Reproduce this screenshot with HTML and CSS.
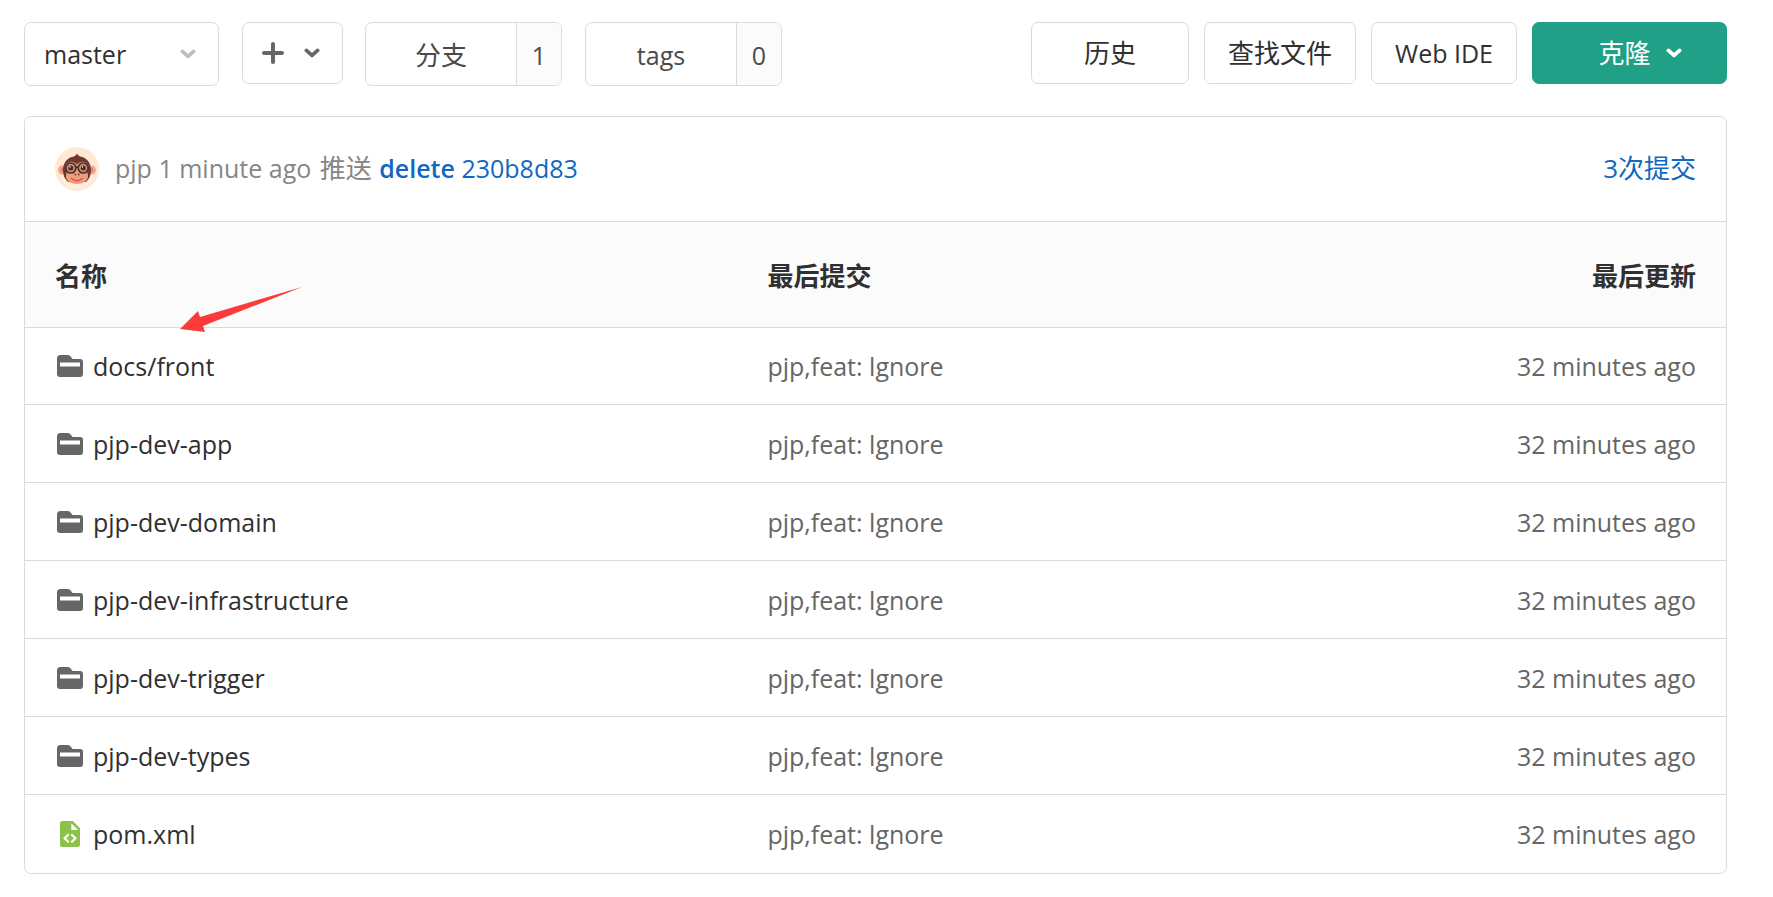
FILE: index.html
```html
<!DOCTYPE html>
<html lang="zh-CN">
<head>
<meta charset="utf-8">
<title>Repository files</title>
<link rel="stylesheet" href="styles.css">
</head>
<body>
<svg class="sprite" aria-hidden="true">
  <symbol id="chevron" viewBox="0 0 16 10"><path d="M2.4 2.4 8 7.4l5.600-5" fill="none" stroke="currentColor" stroke-width="3.800" stroke-linecap="round" stroke-linejoin="round"/></symbol>
  <symbol id="folder" viewBox="0 0 26 24"><path fill="#666" fill-rule="evenodd" d="M3.500 1h7.200c1 0 1.800.4 2.500 1.100L15.600 5H23a3 3 0 0 1 3 3v12a3 3 0 0 1-3 3H3a3 3 0 0 1-3-3V4.500A3.500 3.500 0 0 1 3.500 1zM3 8.500v4h20v-4z"/></symbol>
  <symbol id="xml" viewBox="0 0 20 26"><path fill="#8bc34a" d="M2.500 0h10.300L20 7.300v16.200a2.500 2.500 0 0 1-2.500 2.500h-15A2.500 2.500 0 0 1 0 23.500v-21A2.500 2.500 0 0 1 2.500 0z"/><path fill="#fff" d="M11.300 2.300V9H18z"/><path fill="none" stroke="#fff" stroke-width="2.200" d="M8.700 13.200 4.600 17.200l4.100 4M11.300 13.200l4.100 4-4.100 4"/></symbol>
</svg>
<main class="page">
  <div class="toolbar">
    <div class="select-box">
      <select class="box ref-select" aria-label="Branch"><option>master</option></select>
      <svg class="chevron select-arrow"><use href="#chevron"/></svg>
    </div>
    <button class="box add" type="button" aria-label="Add">
      <svg class="plus" viewBox="0 0 22 22"><path d="M11 2v18M2 11h18" stroke="currentColor" stroke-width="4" stroke-linecap="round"/></svg>
      <svg class="chevron"><use href="#chevron"/></svg>
    </button>
    <a class="box counter" href="#"><span class="label cjk">分支</span><span class="count">1</span></a>
    <a class="box counter" href="#"><span class="label">tags</span><span class="count">0</span></a>
    <div class="actions">
      <button class="box action history cjk" type="button">历史</button>
      <button class="box action cjk" type="button">查找文件</button>
      <button class="box action" type="button">Web IDE</button>
      <button class="box action clone cjk" type="button">克隆<svg class="chevron"><use href="#chevron"/></svg></button>
    </div>
  </div>

  <section class="panel">
    <div class="commit">
      <svg class="avatar" viewBox="0 0 44 44" role="img" aria-label="pjp">
        <circle cx="22" cy="22" r="22" fill="#ffe9d2"/>
        <ellipse cx="22" cy="27" rx="16" ry="15" fill="#fff1df"/>
        <circle cx="7.500" cy="23" r="4.500" fill="#f2a58c"/><circle cx="36.500" cy="23" r="4.500" fill="#f2a58c"/>
        <circle cx="8" cy="23" r="2.300" fill="#e8806f"/><circle cx="36" cy="23" r="2.300" fill="#e8806f"/>
        <path fill="#713532" d="M19 9.500 21 8l.8-1.500L23 8l2 1.500c7 1 11 6.500 11 14 0 5-2 9-5 11.500H13c-3-2.500-5-6.500-5-11.500 0-7.500 4-13 11-14z"/>
        <path fill="#ef9e7c" d="M22 17.500c2-2 4.500-3 7-2.500 4 .8 5.500 4 4.500 7.500-.4 1.500-1.500 2.500-1 4 2.500 6-3.500 10.500-10.500 10.500S9 32.500 11.500 26.500c.5-1.500-.6-2.500-1-4-1-3.500.5-6.700 4.500-7.500 2.500-.5 5 .5 7 2.500z"/>
        <g fill="#d98c70" stroke="#42302a" stroke-width="1.700"><circle cx="15.800" cy="21" r="5"/><circle cx="28.200" cy="21" r="5"/></g>
        <path d="M20.500 20.500q1.500-1 3 0" stroke="#42302a" stroke-width="1.500" fill="none"/>
        <circle cx="15.800" cy="21" r="2.500" fill="#42302a"/><circle cx="28.200" cy="21" r="2.500" fill="#42302a"/>
        <circle cx="15" cy="20" r=".7" fill="#fff"/><circle cx="27.400" cy="20" r=".7" fill="#fff"/>
        <circle cx="20.300" cy="27.500" r=".9" fill="#713532"/><circle cx="23.700" cy="27.500" r=".9" fill="#713532"/>
        <path d="M16.500 31.500q5.500 4.500 11 0" fill="none" stroke="#dd4f5c" stroke-width="1.500" stroke-linecap="round"/>
      </svg>
      <p class="message">pjp 1 minute ago <span class="cjk pushed">推送</span> <a class="strong" href="#">delete</a> <a href="#">230b8d83</a></p>
      <a class="total cjk" href="#">3次提交</a>
    </div>
    <div class="files">
      <table>
        <thead><tr><th class="name">名称</th><th class="last">最后提交</th><th class="time">最后更新</th></tr></thead>
        <tbody>
          <tr><td><a class="file" href="#"><svg class="icon"><use href="#folder"/></svg>docs/front</a></td><td class="last">pjp,feat: lgnore</td><td class="time">32 minutes ago</td></tr>
          <tr><td><a class="file" href="#"><svg class="icon"><use href="#folder"/></svg>pjp-dev-app</a></td><td class="last">pjp,feat: lgnore</td><td class="time">32 minutes ago</td></tr>
          <tr><td><a class="file" href="#"><svg class="icon"><use href="#folder"/></svg>pjp-dev-domain</a></td><td class="last">pjp,feat: lgnore</td><td class="time">32 minutes ago</td></tr>
          <tr><td><a class="file" href="#"><svg class="icon"><use href="#folder"/></svg>pjp-dev-infrastructure</a></td><td class="last">pjp,feat: lgnore</td><td class="time">32 minutes ago</td></tr>
          <tr><td><a class="file" href="#"><svg class="icon"><use href="#folder"/></svg>pjp-dev-trigger</a></td><td class="last">pjp,feat: lgnore</td><td class="time">32 minutes ago</td></tr>
          <tr><td><a class="file" href="#"><svg class="icon"><use href="#folder"/></svg>pjp-dev-types</a></td><td class="last">pjp,feat: lgnore</td><td class="time">32 minutes ago</td></tr>
          <tr><td><a class="file" href="#"><svg class="icon"><use href="#xml"/></svg>pom.xml</a></td><td class="last">pjp,feat: lgnore</td><td class="time">32 minutes ago</td></tr>
        </tbody>
      </table>
      <svg class="pointer" viewBox="0 0 122 46" aria-hidden="true"><path fill="#fb3a3a" d="M0 42 18 24l2 6L122 0 23 39l2 6z"/></svg>
    </div>
  </section>
</main>
</body>
</html>
```
FILE: styles.css
```css
* { box-sizing: border-box; }
body {
  margin: 0;
  background: #fff;
  color: #303030;
  font: 25px/36px "Open Sans", "Noto Sans CJK SC", sans-serif;
}
a { color: #1068bf; text-decoration: none; }
svg { display: block; flex: none; }
.sprite { position: absolute; width: 0; height: 0; }
.cjk { font-size: 26px; }
.page { padding: 22px 46px 22px 24px; }

.toolbar { display: flex; align-items: flex-start; }
.box {
  height: 62px;
  border: 1px solid #dbdbdb;
  border-radius: 7px;
  background: #fff;
  color: #303030;
  font-family: inherit;
  font-size: 25px;
  line-height: 36px;
}
.box.cjk { font-size: 26px; }
.chevron { width: 16px; height: 10px; color: #666; }
.select-box { position: relative; margin-right: 23px; }
.ref-select { appearance: none; width: 195px; height: 64px; padding: 0 19px; }
.select-arrow { position: absolute; right: 23px; top: 27px; color: #bfbfbf; pointer-events: none; }
.add {
  display: flex;
  align-items: center;
  justify-content: center;
  gap: 20px;
  width: 101px;
  margin-right: 22px;
  padding: 0 4px 0 0;
}
.plus { width: 22px; height: 22px; color: #666; }
.counter {
  display: flex;
  width: 197px;
  height: 64px;
  margin-right: 23px;
  overflow: hidden;
  color: #4a4a4a;
  line-height: 64px;
  text-align: center;
}
.label { flex: 1; }
.count { width: 45px; border-left: 1px solid #dbdbdb; background: #fbfbfb; }
.actions { display: flex; gap: 15px; margin-left: auto; }
.action { padding: 0 23px; }
.history { width: 158px; }
.clone {
  display: flex;
  align-items: center;
  justify-content: center;
  gap: 15px;
  width: 195px;
  padding: 0 0 0 21px;
  border-color: #1fa087;
  background: #1fa087;
  color: #fff;
}
.clone .chevron { color: #fff; }

.panel {
  margin-top: 30px;
  padding-bottom: 1px;
  overflow: hidden;
  border: 1px solid #dbdbdb;
  border-radius: 7px;
}
.commit { display: flex; align-items: center; height: 104px; padding: 0 30px; }
.avatar { width: 44px; height: 44px; }
.message { margin: 0 0 2px 16px; color: #868686; }
.pushed { margin: 0 1px 0 2px; }
.strong { font-weight: 600; }
.total { margin: 0 0 2px auto; }
.files { position: relative; }
table { width: 100%; table-layout: fixed; border-collapse: separate; border-spacing: 0; }
th, td { padding: 0 30px; border-top: 1px solid #dbdbdb; text-align: left; }
th { height: 106px; padding-top: 2px; background: #fbfbfb; font-size: 26px; font-weight: 700; }
.name { width: 42%; }
.last { padding-left: 28px; }
td { height: 78px; color: #666; }
tbody tr:first-child td { height: 77px; }
th.time, td.time { text-align: right; }
.file { display: flex; align-items: center; gap: 10px; padding-left: 2px; color: #303030; }
.icon { width: 26px; height: 26px; }
.pointer { position: absolute; left: 155px; top: 66px; width: 122px; height: 46px; }
```
